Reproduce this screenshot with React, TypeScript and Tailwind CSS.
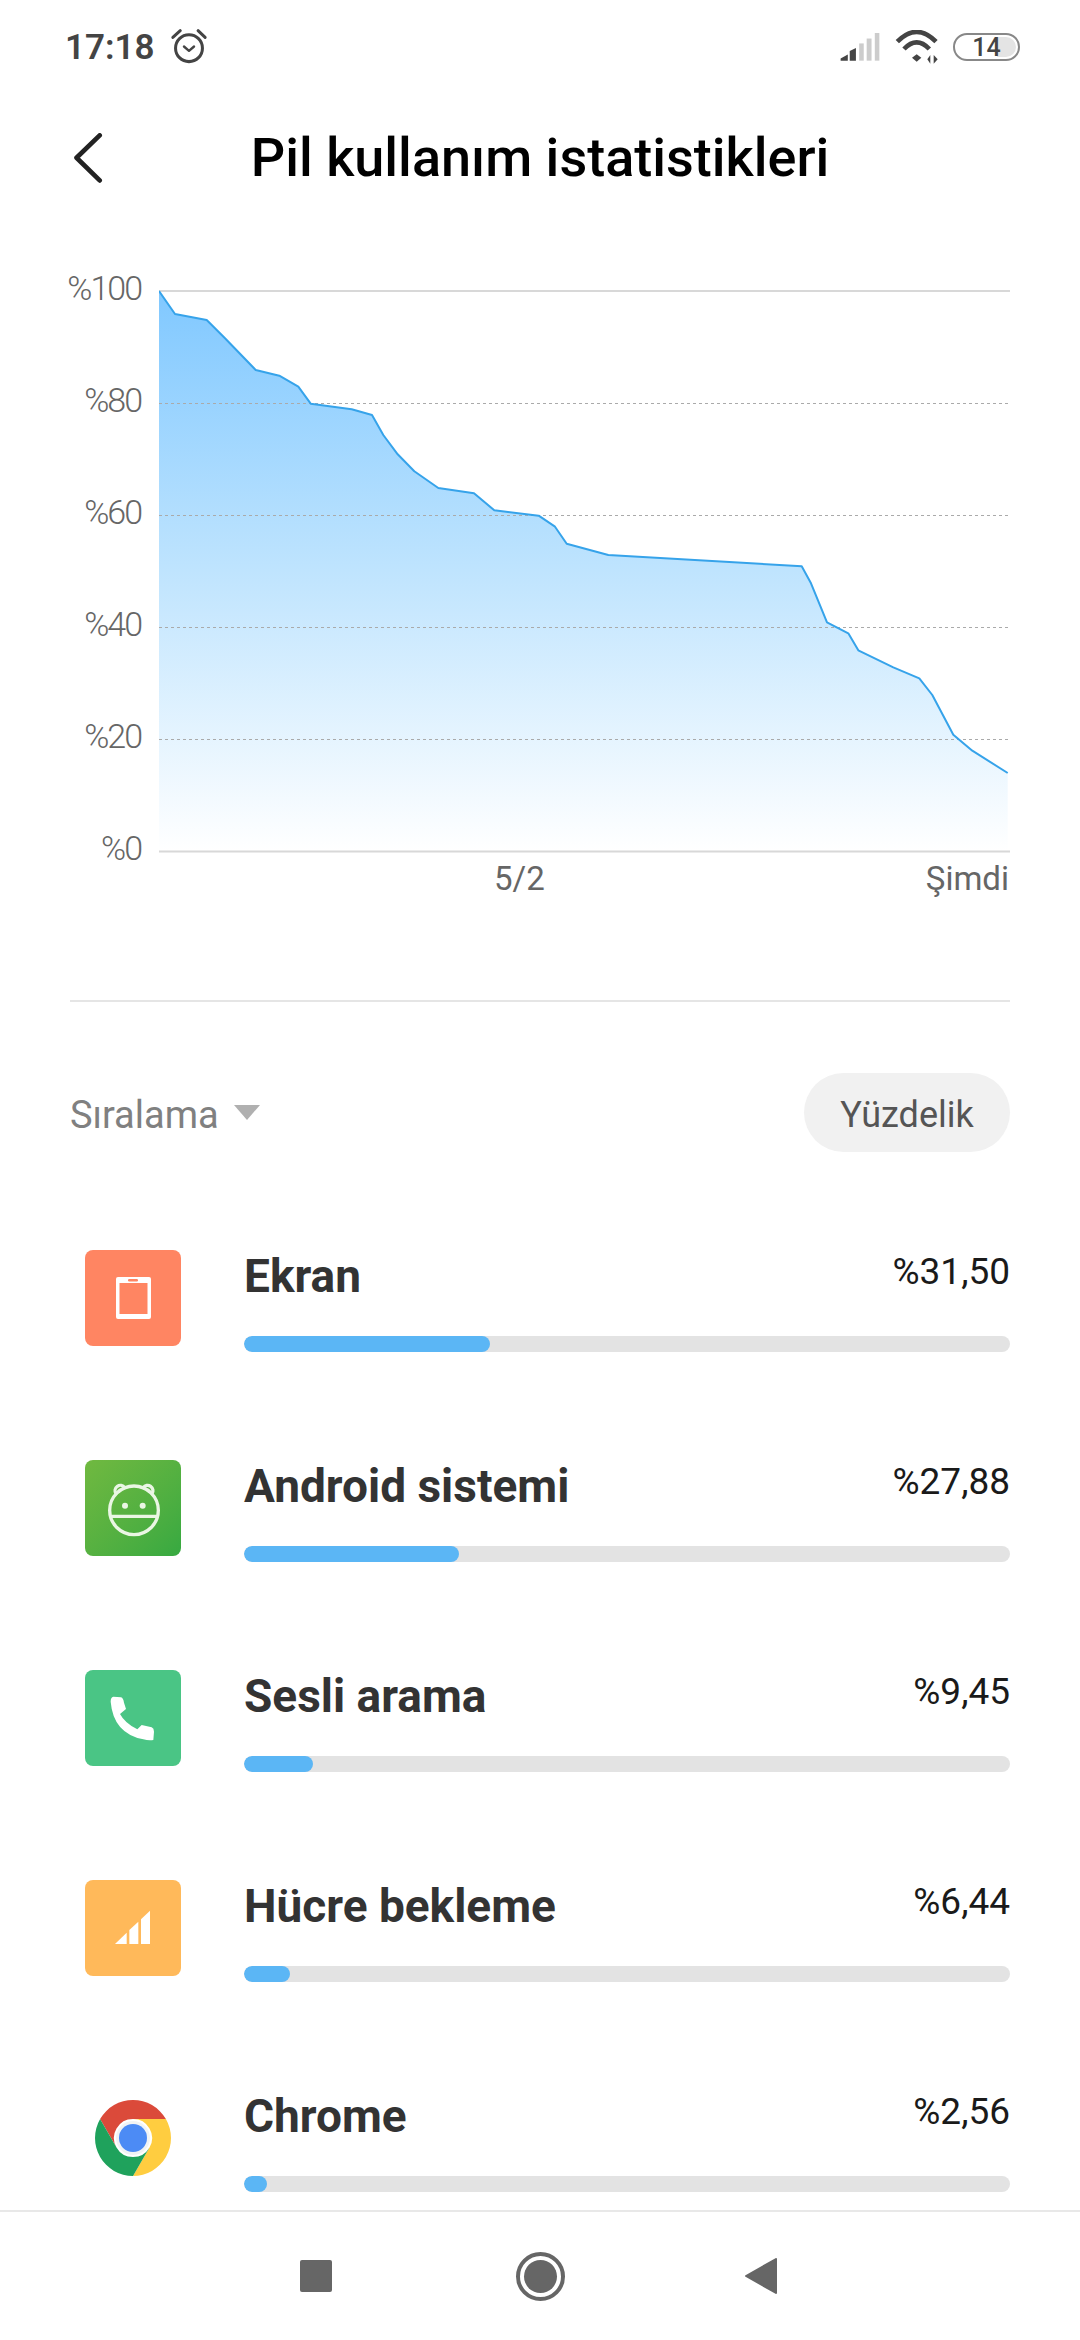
const chartPoints = [
  [159, 291], [175, 314], [206.7, 320], [225, 338.3], [255.7, 370], [279.3, 375.7], [298.3, 386.7], [310.7, 403.7],
  [351.7, 409.3], [372, 415], [383.3, 435], [397.7, 454.3], [414.3, 471.3], [438.3, 488], [474, 493.3], [494.3, 510.3],
  [538.7, 515.7], [555, 526.7], [566.7, 543.7], [608.3, 555], [801.7, 566.3], [811, 583.3], [827, 622.3], [848.3, 633.3],
  [858.3, 650.3], [893.3, 667.3], [919.3, 678.3], [932.3, 695], [953.3, 734.7], [972.3, 750.7], [1007.7, 773],
];

const linePath = chartPoints.map(([x, y], i) => `${i === 0 ? "M" : "L"}${x} ${y}`).join(" ");
const areaPath = `${linePath} L1007.7 851 L159 851 Z`;

const yLabels = ["%100", "%80", "%60", "%40", "%20", "%0"];

function ScreenIcon() {
  return (
    <div className="flex h-[96px] w-[96px] items-center justify-center rounded-lg bg-[#ff8562]">
      <svg width="96" height="96" viewBox="0 0 96 96">
        <rect x="31" y="27" width="35" height="42" rx="2" fill="#fff" />
        <rect x="34.5" y="33" width="28" height="31" fill="#ff8562" />
        <rect x="43" y="29" width="10" height="2.5" rx="1.2" fill="#ff8562" />
      </svg>
    </div>
  );
}

function AndroidIcon() {
  return (
    <div className="h-[96px] w-[96px] rounded-lg bg-gradient-to-br from-[#70b940] to-[#36a941]">
      <svg width="96" height="96" viewBox="15 15 288 288" fill="none" stroke="#eaf6e4" strokeWidth="10">
        <circle cx="162" cy="166" r="73" />
        <path d="M108 116 A15 15 0 1 1 134 98" strokeLinecap="round" />
        <path d="M216 116 A15 15 0 1 0 190 98" strokeLinecap="round" />
        <path d="M92 184 H232" />
        <circle cx="135" cy="152" r="9" fill="#eaf6e4" stroke="none" />
        <circle cx="188" cy="152" r="9" fill="#eaf6e4" stroke="none" />
      </svg>
    </div>
  );
}

function PhoneIcon() {
  return (
    <div className="h-[96px] w-[96px] rounded-lg bg-[#4ac585]">
      <svg width="96" height="96" viewBox="75 90 288 288">
        <path
          d="M160 170 L183 172 Q190 174 192 188 L198 207 L180 222 Q195 250 232 268 L245 255 L275 262 Q282 265 282 275 L280 300 Q265 302 250 298 Q160 280 152 185 Q152 172 160 170 Z"
          fill="#fff"
        />
      </svg>
    </div>
  );
}

function CellIcon() {
  return (
    <div className="h-[96px] w-[96px] rounded-lg bg-[#ffb95a]">
      <svg width="96" height="96" viewBox="75 720 288 288" fill="#fff">
        <polygon points="165,912 200,878 200,912" />
        <polygon points="208,870 235,845 235,912 208,912" />
        <polygon points="243,838 270,812 270,912 243,912" />
      </svg>
    </div>
  );
}

function ChromeIcon() {
  return (
    <div className="flex h-[96px] w-[96px] items-center justify-center">
      <svg width="76" height="76" viewBox="-38 -38 76 76">
        <path d="M-32.9 -19 A38 38 0 0 1 32.9 -19 L0 -19 A19 19 0 0 0 -16.5 9.5 Z" fill="#db4a3a" />
        <path d="M32.9 -19 A38 38 0 0 1 0 38 L16.5 9.5 A19 19 0 0 0 0 -19 Z" fill="#ffcd40" />
        <path d="M0 38 A38 38 0 0 1 -32.9 -19 L-16.5 9.5 A19 19 0 0 0 16.5 9.5 Z" fill="#1fa25c" />
        <circle r="17" fill="#f1f3f4" />
        <circle r="14" fill="#4c8bf5" />
      </svg>
    </div>
  );
}

const usageRows = [
  { name: "Ekran", value: "%31,50", fill: 246, icon: <ScreenIcon /> },
  { name: "Android sistemi", value: "%27,88", fill: 215, icon: <AndroidIcon /> },
  { name: "Sesli arama", value: "%9,45", fill: 69, icon: <PhoneIcon /> },
  { name: "Hücre bekleme", value: "%6,44", fill: 46, icon: <CellIcon /> },
  { name: "Chrome", value: "%2,56", fill: 23, icon: <ChromeIcon /> },
];

function StatusBar() {
  return (
    <div className="relative flex h-[96px] shrink-0 items-center pl-[65px] pr-[60px] pb-[2px] text-[#444]">
      <span className="text-[35px] font-semibold leading-none">17:18</span>
      <svg width="40" height="39" viewBox="490 90 116 116" className="ml-[14px]" fill="none" stroke="#444" strokeWidth="9" strokeLinecap="round">
        <circle cx="548" cy="150" r="40" />
        <path d="M500 118 L522 98 M575 98 L596 118" />
        <path d="M533 145 L548 158 L563 145" strokeWidth="7" strokeLinejoin="round" />
      </svg>
      <svg width="41" height="30" viewBox="170 98 126 90" className="ml-auto">
        <polygon points="175,178 197,166 197,185 175,185" fill="#444" />
        <polygon points="203,155 222,146 222,185 203,185" fill="#444" />
        <rect x="232" y="132" width="14" height="53" fill="#ccc" />
        <rect x="255" y="117" width="15" height="68" fill="#ccc" />
        <rect x="280" y="100" width="14" height="85" fill="#ccc" />
      </svg>
      <svg width="46" height="34" viewBox="340 95 138 102" className="ml-[15px]">
        <path d="M347 130 Q405 72 463 130" fill="none" stroke="#444" strokeWidth="14" />
        <path d="M367 152 Q405 112 443 152" fill="none" stroke="#444" strokeWidth="14" />
        <polygon points="391,178 405,168 419,178 405,190" fill="#444" />
        <polygon points="446,170 446,196 437,183" fill="#444" />
        <polygon points="456,170 456,196 468,183" fill="#444" />
      </svg>
      <div className="relative ml-[12px] flex h-[28px] w-[67px] items-center justify-center overflow-hidden rounded-full border-[2.5px] border-[#888]">
        <div className="absolute bottom-[2px] right-[2px] top-[2px] w-[19px] rounded-r-full bg-[#e4e4e4]" />
        <span className="relative text-[25px] font-medium leading-none">14</span>
      </div>
    </div>
  );
}

function Header() {
  return (
    <div className="relative flex h-[124px] shrink-0 items-center justify-center">
      <svg width="30" height="50" viewBox="72 132 27 48" className="absolute left-[73px] top-[37px]" fill="none" stroke="#222" strokeWidth="4.5" strokeLinecap="round" strokeLinejoin="round">
        <path d="M96.7 134.3 L74.5 155.8 L96.7 177.5" />
      </svg>
      <h1 className="text-[54px] font-medium leading-none text-black">Pil kullanım istatistikleri</h1>
    </div>
  );
}

function BatteryChart() {
  return (
    <div className="mt-[48px] grid shrink-0 grid-cols-[159px_852px] grid-rows-[588px_44px]">
      <div className="row-span-2 flex h-[600px] flex-col justify-between pr-[18px] text-right text-[34px] font-light tracking-[-2px] text-[#666]">
        {yLabels.map((label) => (
          <span key={label} className="h-[40px] leading-[40px]">
            {label}
          </span>
        ))}
      </div>
      <svg width="852" height="588" viewBox="159 268 852 588">
        <defs>
          <linearGradient id="batteryFill" x1="0" y1="0" x2="0" y2="1">
            <stop offset="0" stopColor="#80c8ff" />
            <stop offset="0.5" stopColor="#bfe4fe" />
            <stop offset="1" stopColor="#ffffff" />
          </linearGradient>
        </defs>
        <line x1="159" y1="291" x2="1010" y2="291" stroke="#d8d8d8" strokeWidth="2" />
        <path d={areaPath} fill="url(#batteryFill)" />
        {[403.5, 515.5, 627.5, 739.5].map((y) => (
          <line key={y} x1="159" y1={y} x2="1008" y2={y} stroke="#aaa" strokeWidth="1" strokeDasharray="3 3" />
        ))}
        <path d={linePath} fill="none" stroke="#36a3ea" strokeWidth="2" strokeLinejoin="round" />
        <line x1="159" y1="851.5" x2="1010" y2="851.5" stroke="#d8d8d8" strokeWidth="2" />
      </svg>
      <div className="flex items-center justify-between pr-[2px] text-[33px] leading-none text-[#666]">
        <span className="ml-[335px]">5/2</span>
        <span>Şimdi</span>
      </div>
    </div>
  );
}

function SortRow() {
  return (
    <div className="mx-[70px] mt-[71px] flex h-[79px] shrink-0 items-center justify-between">
      <div className="flex items-center">
        <span className="pt-[4px] text-[38px] leading-none text-[#808080]">Sıralama</span>
        <div className="ml-[15px] h-0 w-0 border-x-[13px] border-t-[15px] border-x-transparent border-t-[#b0b0b0]" />
      </div>
      <div className="flex h-[79px] w-[206px] items-center justify-center rounded-full bg-[#f1f1f1] pt-[4px] text-[36px] leading-none text-[#555]">
        Yüzdelik
      </div>
    </div>
  );
}

function UsageRow({ name, value, fill, icon }: (typeof usageRows)[number]) {
  return (
    <div className="flex h-[210px] shrink-0 pl-[15px]">
      {icon}
      <div className="ml-[63px] flex h-[102px] flex-1 flex-col justify-between">
        <div className="flex items-start justify-between">
          <span className="text-[46px] font-bold leading-[52px] text-[#333]">{name}</span>
          <span className="text-[37px] leading-[44px] text-[#1a1a1a]">{value}</span>
        </div>
        <div className="h-[16px] overflow-hidden rounded-full bg-[#e3e3e3]">
          <div className="h-full rounded-full bg-[#5bb6f5]" style={{ width: fill }} />
        </div>
      </div>
    </div>
  );
}

function NavBar() {
  return (
    <div className="flex h-[130px] shrink-0 items-center border-t-2 border-[#e8e8e8] bg-white pl-[300px]">
      <div className="h-[32px] w-[32px] rounded-[2px] bg-[#666]" />
      <div className="ml-[184px] flex h-[49px] w-[49px] items-center justify-center rounded-full border-[4px] border-[#666]">
        <div className="h-[33px] w-[33px] rounded-full bg-[#666]" />
      </div>
      <svg width="32" height="36" viewBox="0 0 32 36" className="ml-[180px]" fill="#666" stroke="#666" strokeWidth="2" strokeLinejoin="round">
        <polygon points="1,18 31,1 31,35" />
      </svg>
    </div>
  );
}

export default function App() {
  return (
    <div className="flex h-[2340px] w-[1080px] flex-col overflow-hidden bg-white font-['Roboto',sans-serif]">
      <StatusBar />
      <Header />
      <BatteryChart />
      <div className="mx-[70px] mt-[100px] h-[2px] shrink-0 bg-[#e5e5e5]" />
      <SortRow />
      <div className="mx-[70px] mt-[98px] flex min-h-0 flex-1 flex-col overflow-hidden">
        {usageRows.map((row) => (
          <UsageRow key={row.name} {...row} />
        ))}
      </div>
      <NavBar />
    </div>
  );
}
